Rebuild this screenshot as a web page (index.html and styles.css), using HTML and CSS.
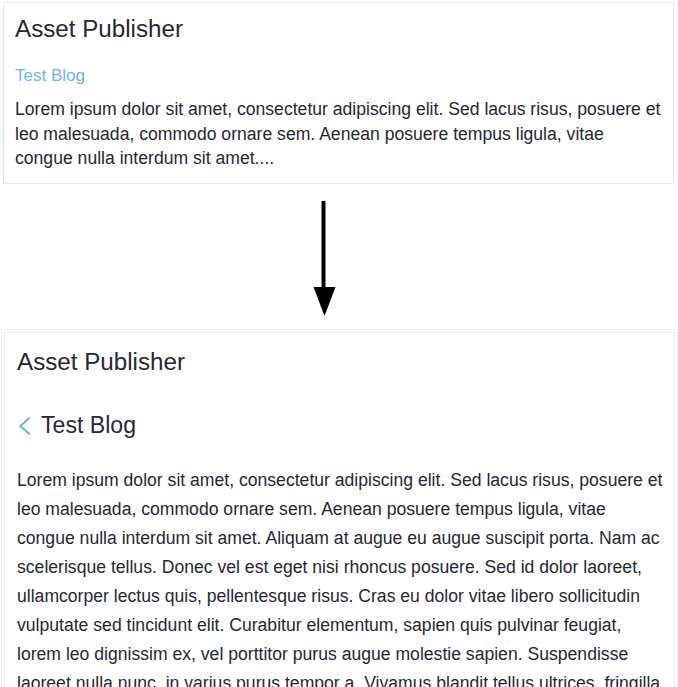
FILE: index.html
```html
<!DOCTYPE html>
<html lang="en">
<head>
<meta charset="utf-8">
<title>Asset Publisher</title>
<link rel="stylesheet" href="styles.css">
</head>
<body>
<div class="page">
  <section class="card card-list">
    <h2 class="portlet-title">Asset Publisher</h2>
    <a class="asset-link" href="#">Test Blog</a>
    <p class="summary">Lorem ipsum dolor sit amet, consectetur adipiscing elit. Sed lacus risus, posuere et leo malesuada, commodo ornare sem. Aenean posuere tempus ligula, vitae congue nulla interdum sit amet....</p>
  </section>

  <div class="transition">
    <svg class="arrow" width="40" height="148" viewBox="0 0 40 148" aria-hidden="true">
      <rect x="17.5" y="17" width="4" height="88" fill="#000"/>
      <polygon points="9.5,103 31.5,103 20.5,132" fill="#000"/>
    </svg>
  </div>

  <section class="card card-detail">
    <h2 class="portlet-title">Asset Publisher</h2>
    <div class="asset-header">
      <a class="back" href="#" aria-label="Back">
        <svg width="24" height="24" viewBox="0 0 24 24"><polyline points="12.7,4.7 3.3,13 12.7,21.3" fill="none" stroke="#6bb3ef" stroke-width="2"/></svg>
      </a>
      <h3 class="asset-title">Test Blog</h3>
    </div>
    <p class="content">Lorem ipsum dolor sit amet, consectetur adipiscing elit. Sed lacus risus, posuere et leo malesuada, commodo ornare sem. Aenean posuere tempus ligula, vitae congue nulla interdum sit amet. Aliquam at augue eu augue suscipit porta. Nam ac scelerisque tellus. Donec vel est eget nisi rhoncus posuere. Sed id dolor laoreet, ullamcorper lectus quis, pellentesque risus. Cras eu dolor vitae libero sollicitudin vulputate sed tincidunt elit. Curabitur elementum, sapien quis pulvinar feugiat, lorem leo dignissim ex, vel porttitor purus augue molestie sapien. Suspendisse laoreet nulla nunc, in varius purus tempor a. Vivamus blandit tellus ultrices, fringilla lorem non, facilisis nisl. Integer sit amet mattis neque, sed condimentum mauris.</p>
  </section>
</div>
</body>
</html>
```

FILE: styles.css
```css
html {
  overflow: hidden;
  background: #fff;
}

body {
  margin: 0;
  font-family: "Liberation Sans", Arial, sans-serif;
  color: #272833;
}

.page {
  padding-top: 2px;
}

.card {
  box-sizing: border-box;
  width: 671px;
  border: 1px solid #e1ecee;
  background: #fff;
}

.card-list {
  margin-left: 3px;
  padding: 12px 9px 12px 11px;
}

.card-detail {
  margin-left: 4px;
  padding: 15px 8px 0 12px;
  box-shadow: 0 0 0 2px #fff, 0 0 0 3px #eef4f5;
}

.portlet-title {
  margin: 0 0 21px;
  font-size: 24.2px;
  line-height: 28px;
  font-weight: normal;
}

.card-detail .portlet-title {
  margin-bottom: 35px;
}

.asset-link {
  display: block;
  font-size: 17px;
  line-height: 24px;
  color: #6bb3ef;
  text-decoration: none;
}

.summary {
  margin: 9px 0 0;
  font-size: 17.6px;
  line-height: 24.6px;
}

.transition {
  height: 148px;
}

.arrow {
  display: block;
  margin-left: 303.5px;
}

.asset-header {
  display: flex;
  align-items: center;
  height: 28px;
}

.back {
  display: flex;
  width: 24px;
  height: 24px;
}

.back svg {
  display: block;
}

.asset-title {
  margin: 0;
  font-size: 23.1px;
  line-height: 28px;
  font-weight: normal;
}

.content {
  margin: 27px 0 0;
  font-size: 17.6px;
  line-height: 29px;
}
```
